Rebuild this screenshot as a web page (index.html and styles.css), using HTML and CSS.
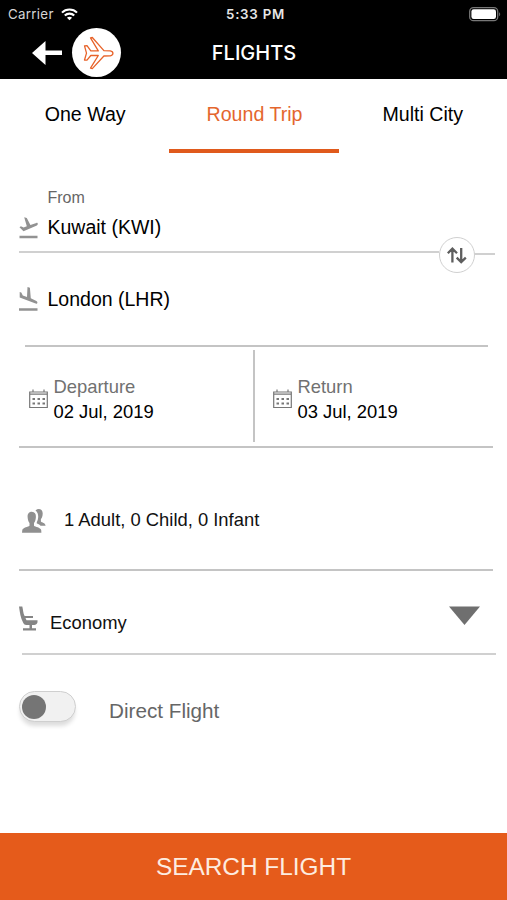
FILE: index.html
```html
<!DOCTYPE html>
<html lang="en">
<head>
<meta charset="utf-8">
<title>Flights</title>
<link rel="stylesheet" href="styles.css">
</head>
<body>
<header class="top">
  <div class="status">
    <div class="carrier"><span>Carrier</span>
      <svg width="17" height="13" viewBox="0 0 17 13" fill="none" stroke="#fff" stroke-width="2.1"><path d="M1 4.6C5 .4 12 .4 16 4.6M3.8 7.6c2.6-2.7 6.8-2.7 9.4 0"/><path d="M8.500 12.300 5.900 9.700c1.400-1.300 3.800-1.300 5.200 0z" fill="#fff" stroke="none"/></svg>
    </div>
    <span class="time">5:33 PM</span>
    <svg class="battery" width="32" height="15" viewBox="0 0 32 15"><rect x=".7" y=".7" width="28" height="13" rx="3.8" fill="none" stroke="#777" stroke-width="1.300"/><rect x="2.400" y="2.300" width="24.600" height="9.800" rx="2.300" fill="#fff"/><path d="M30.200 5.200c1.300.7 1.300 3.400 0 4z" fill="#777"/></svg>
  </div>
  <div class="nav">
    <div class="nav-left">
      <svg width="30" height="26" viewBox="0 0 30 26" fill="#fff"><path d="M0 13 13.500 1v9.500H30v4.500H13.500v10z"/></svg>
      <span class="badge"><svg width="32" height="34" viewBox="0 0 32 34" fill="none" stroke="#e8632a" stroke-width="1.300" stroke-linejoin="round"><path d="M2.500 9.800 5 9.600l3.800 5.300h7.500L8.500 1.800l1.800-.3 11.600 13.100 6.400.2c3.500.6 3.500 4.400 0 5l-6.400.2L10.300 32.600l-1.800-.4 7.800-12.700H8.800L5 24.200l-2.500-.2 2-6.900z"/></svg></span>
    </div>
    <h1>FLIGHTS</h1>
  </div>
</header>
<nav class="tabs">
  <div class="tab">One Way</div>
  <div class="tab active">Round Trip</div>
  <div class="tab">Multi City</div>
</nav>
<main>
  <section class="from">
    <div class="label">From</div>
    <div class="place">
      <svg width="19" height="22" viewBox="0 0 19 22" fill="#929292"><path d="M.5 18.800h18v2.400H.5zM5.200.3 7.800.9l3.600 7 6-2c1.600-.3 1.900 1.900.5 2.500L4.500 14.200 .5 10.200l1.400-1 2.700 1.200 3.200-1.100z"/></svg>
      <span>Kuwait (KWI)</span>
    </div>
    <div class="swap"><svg width="20" height="17" viewBox="0 0 20 17" fill="none" stroke="#5e5e5e" stroke-width="2.300"><path d="M5.400 15.500V2M.8 6.300l4.600-4.600L10 6.300M14.200 1v13.800M9.700 10.600l4.500 4.500 4.600-4.500"/></svg></div>
  </section>
  <section class="to">
    <div class="place">
      <svg width="19" height="25" viewBox="0 0 19 25" fill="#929292"><path d="M0 21.300h18.500v2.400H0zM8.500 0l2.400.7.900 10.600 5.600 2.600c1.800 1 1 3.400-.8 2.700L.7 10.600V4.900l1.600.7 1.500 2.900 4.200 1.400z"/></svg>
      <span>London (LHR)</span>
    </div>
  </section>
  <section class="dates">
    <div class="date">
      <svg width="19" height="20" viewBox="0 0 19 20" fill="none" stroke="#777"><path d="M.7 3h17.600v15.500H.7zM1 5.200h17M4 .5v3M15 .5v3" stroke-width="1.200"/><path d="M3.500 10h12.500M3.500 14.500h12.500" stroke-width="2.200" stroke-dasharray="2.500 2.500"/></svg>
      <div><div class="caption">Departure</div><div>02 Jul, 2019</div></div>
    </div>
    <div class="divider"></div>
    <div class="date">
      <svg width="19" height="20" viewBox="0 0 19 20" fill="none" stroke="#777"><path d="M.7 3h17.600v15.500H.7zM1 5.200h17M4 .5v3M15 .5v3" stroke-width="1.200"/><path d="M3.500 10h12.500M3.500 14.500h12.500" stroke-width="2.200" stroke-dasharray="2.500 2.500"/></svg>
      <div><div class="caption">Return</div><div>03 Jul, 2019</div></div>
    </div>
  </section>
  <section class="people">
    <svg width="25" height="25" viewBox="0 0 25 25" fill="#909090"><path d="M9.800 3.800c2.900 0 4.300 2.100 4.100 5.200-.2 3-.9 4.800-1.900 6v2.800c1.200 1.300 6.400 1.600 7.200 4.200l.2 2.700H0l.3-2.700c.8-2.600 6-2.900 7.200-4.200V15c-1-1.200-1.700-3-1.900-6-.2-3.100 1.300-5.200 4.200-5.200z"/><path d="M13.500 2.400c2.900-2.600 7.300-1.200 7.200 3-.1 3-.8 4.500-1.800 5.700v2.500c1 1.200 4.300 1.200 4.700 4.200h-5.100c-1.200-1.400-2.500-1.700-3.700-2.200v-1.500c1.500-2.400 2.700-8.500-1.300-11.700z"/></svg>
    <span>1 Adult, 0 Child, 0 Infant</span>
  </section>
  <section class="cabin">
    <svg width="19" height="25" viewBox="0 0 19 25" fill="#858585"><path d="M0 .5h3.300c1 4 .7 6.300 2.300 9.500H14v2H6.500l1 2.200H18.500v2c-.5 1.800-1.700 2.700-3.300 2.700H13v3.300h4V24.500H4v-2.300h6.500v-3.300H7.200c-1.300 0-2.300-.6-3-2.200C1.500 11.700.8 6.500 0 .5z"/></svg>
    <span>Economy</span>
    <svg class="caret" width="31" height="19" viewBox="0 0 31 19"><path d="M0 .5h31L15.500 19z" fill="#6f6f6f"/></svg>
  </section>
  <section class="direct">
    <div class="switch"><i></i></div>
    <span>Direct Flight</span>
  </section>
</main>
<button class="search">SEARCH FLIGHT</button>
</body>
</html>
```
FILE: styles.css
```css
* { box-sizing: border-box; }
body {
  margin: 0;
  width: 507px;
  height: 900px;
  overflow: hidden;
  display: flex;
  flex-direction: column;
  background: #fff;
  color: #111;
  font: 18.4px/24px "Liberation Sans", Arial, sans-serif;
}
svg { display: block; flex: none; }
span { white-space: nowrap; }

.top { height: 79px; background: #000; color: #fff; flex: none; }
.status {
  height: 27px;
  display: grid;
  grid-template-columns: 1fr auto 1fr;
  align-items: center;
  padding: 1px 6px 0 8px;
  font: 13.3px/26px Inter, sans-serif;
}
.carrier { display: flex; align-items: center; gap: 7px; color: #d5d5d5; letter-spacing: .3px; }
.time { font-weight: 600; color: #e6e6e6; letter-spacing: .75px; padding-left: 2px; }
.battery { justify-self: end; }
.nav {
  height: 50px;
  display: grid;
  grid-template-columns: 1fr auto 1fr;
  align-items: center;
  padding-left: 32px;
  padding-right: 31px;
}
.nav-left { display: flex; align-items: center; gap: 10px; }
.badge {
  width: 49px;
  height: 49px;
  border-radius: 50%;
  background: #fff;
  display: flex;
  align-items: center;
  justify-content: center;
  padding-left: 3px;
}
h1 { margin: 0; font: 500 20px/50px Inter, sans-serif; padding-top: 1px; }

.tabs { display: flex; height: 74px; flex: none; font-size: 19.6px; color: #000; }
.tab { flex: 1; text-align: center; padding: 23px 0 0 1px; border-bottom: 4px solid transparent; }
.tab:last-child { padding-left: 0; }
.tab.active { color: #e4662e; border-bottom-color: #e05a1c; }

main { flex: 1; padding: 0 12px 0 19px; }
.label { font-size: 16px; line-height: 20px; padding-left: 28.500px; color: #666; }
.place { display: flex; align-items: center; gap: 9px; font-size: 19.5px; color: #000; }
.place span { position: relative; top: -1px; left: .5px; }
.from { height: 100px; margin-right: 56px; padding-top: 35px; border-bottom: 2px solid #d0d0d0; position: relative; }
.from::after {
  content: "";
  position: absolute;
  left: 100%;
  top: 100px;
  width: 56px;
  height: 2px;
  background: #d0d0d0;
}
.from .place { padding-top: 8px; }
.swap {
  position: absolute;
  z-index: 1;
  right: -36px;
  top: 84px;
  width: 36px;
  height: 36px;
  border: 1.500px solid #d0d0d0;
  border-radius: 50%;
  background: #fff;
  display: flex;
  align-items: center;
  justify-content: center;
}
.to { height: 94px; margin: 0 7px 0 6px; padding-top: 34px; border-bottom: 2px solid #c4c4c4; }
.to .place { margin-left: -6px; }
.dates {
  height: 101px;
  margin-right: 2px;
  display: grid;
  grid-template-columns: 234px 2px 1fr;
  border-bottom: 2px solid #c4c4c4;
}
.divider { background: #c4c4c4; margin: 3px 0 4px; }
.date { display: flex; gap: 6px; padding: 28px 0 0 9.500px; line-height: 25px; color: #000; }
.divider + .date { padding-left: 17.500px; }
.date svg { margin-top: 14px; }
.caption { color: #717171; line-height: 24px; }
.people {
  height: 123px;
  margin-right: 2px;
  display: flex;
  gap: 17px;
  padding: 60px 0 0 3px;
  border-bottom: 2px solid #c4c4c4;
}
.cabin {
  height: 84px;
  margin: 0 -1px 0 3px;
  display: flex;
  border-bottom: 2px solid #d0d0d0;
  padding: 35px 16px 0 0;
}
.cabin svg:first-child { margin-left: -3px; }
.cabin span { margin: 5px 0 0 12px; }
.cabin .caret { margin-left: auto; }
.direct { display: flex; align-items: flex-start; gap: 33px; padding-top: 36px; color: #666; font-size: 20.7px; }
.direct span { padding-top: 8px; }
.switch {
  width: 57px;
  height: 31px;
  border: 1px solid #cfcfcf;
  border-radius: 16px;
  background: #f1f1f1;
  padding: 3px 2px;
  box-shadow: 0 5px 4px -1px #ddd;
}
.switch i { display: block; width: 24px; height: 24px; border-radius: 50%; background: #757575; }

.search {
  height: 67px;
  flex: none;
  border: 0;
  padding: 0;
  background: #e55b1b;
  color: #fdece0;
  font: 24.4px/67px "Liberation Sans", Arial, sans-serif;
}
```
